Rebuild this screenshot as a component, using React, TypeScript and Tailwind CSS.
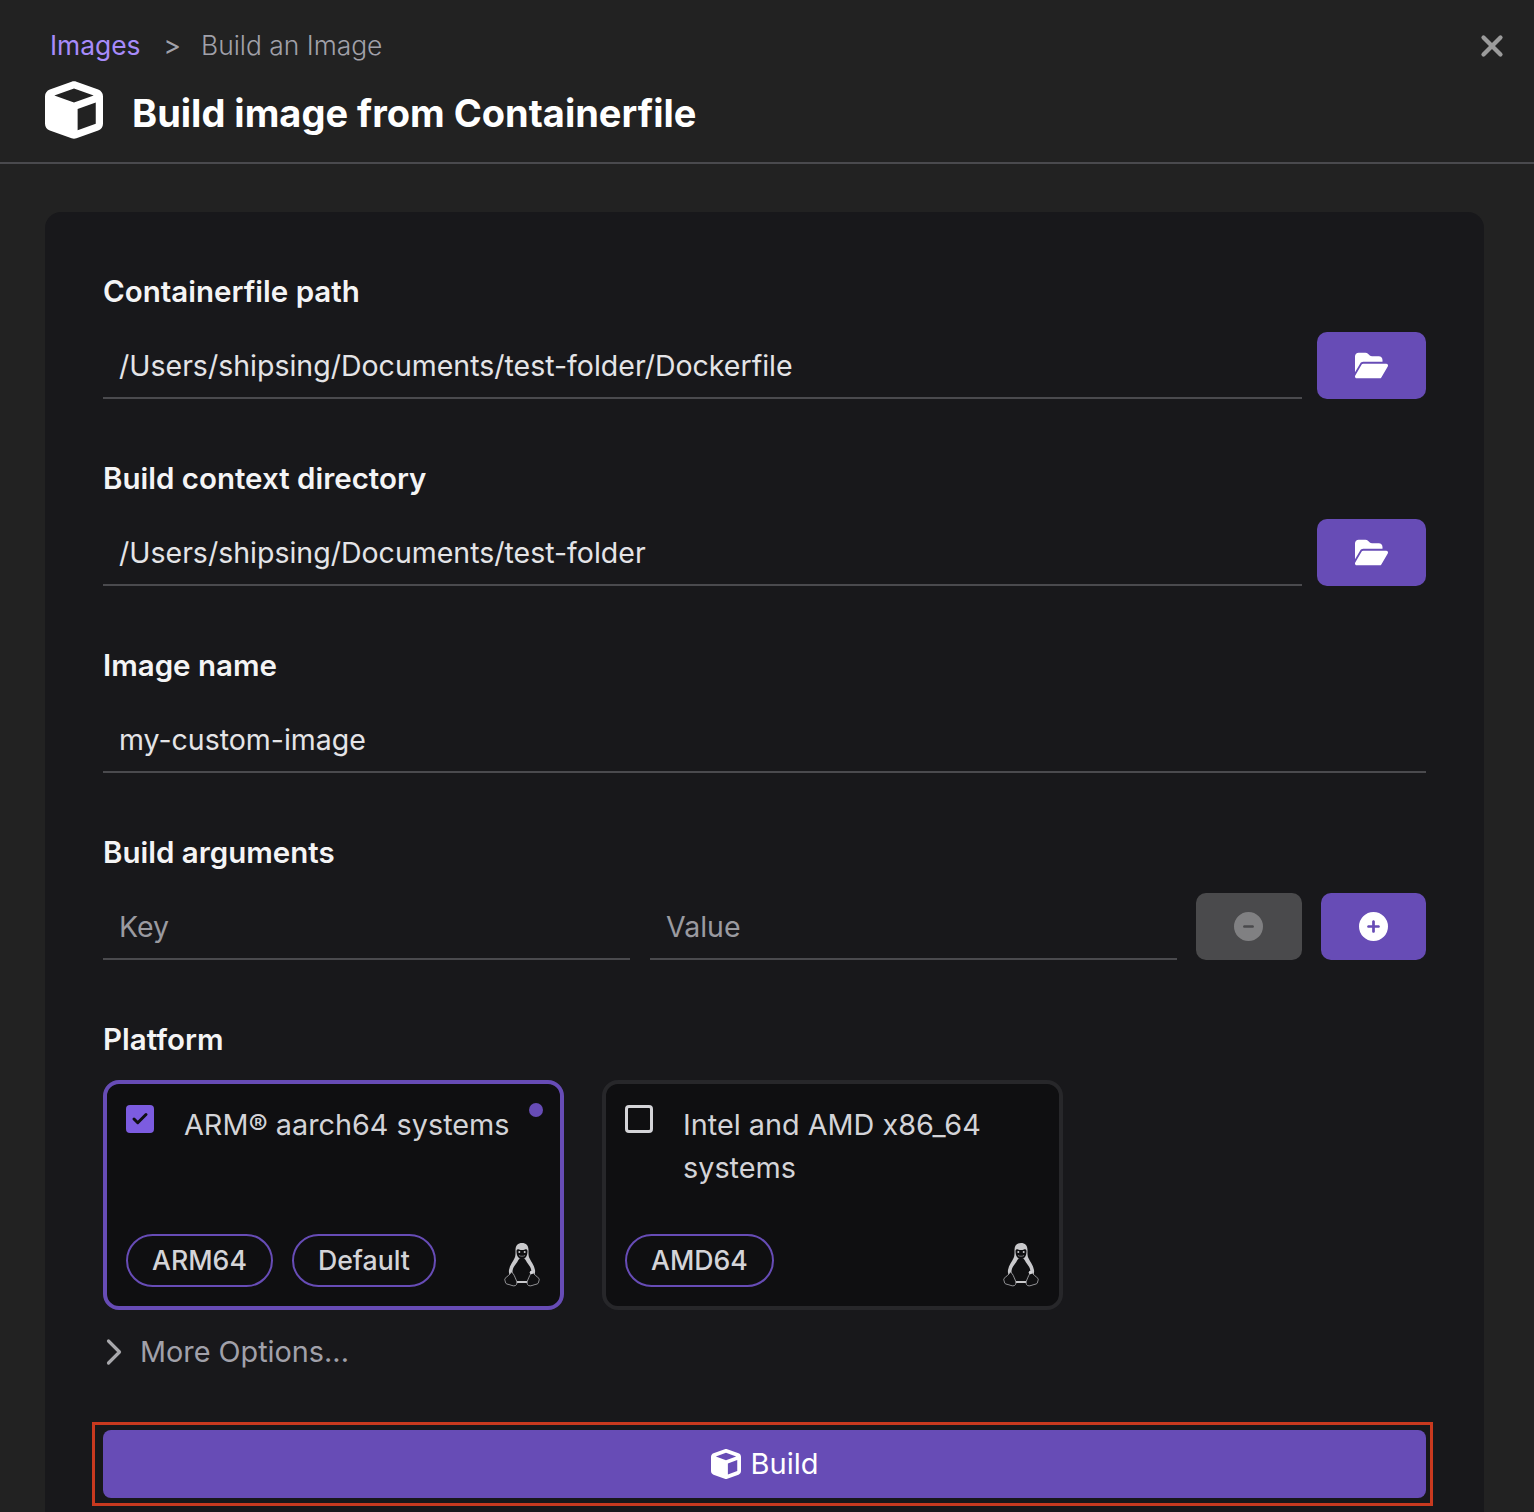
import { FaCube, FaFolderOpen, FaCircleMinus, FaCirclePlus } from "react-icons/fa6";
import { Check, ChevronRight, X } from "lucide-react";

function Tux() {
  return (
    <svg viewBox="0 0 36 44" className="h-[44px] w-[36px] shrink-0" fill="none">
      {/* head and back */}
      <path d="M18 0c-4 0-6.500 2.500-6.500 7 0 3.500.2 5.500-.9 8-1.600 3.500-4.800 7-5.600 12-.3 2 0 4 1 5l4 8h16l4-8c1-1 1.300-3 1-5-.8-5-4-8.500-5.600-12-1.100-2.500-.9-4.500-.9-8 0-4.500-2.500-7-6.500-7z" fill="#c9c9cc" />
      {/* belly */}
      <path d="M18 15c-2 0-3.300 1-4.200 3-1.400 3-5.300 6-5.300 11 0 4 1.500 7 3.500 9h12c2-2 3.500-5 3.500-9 0-5-3.900-8-5.300-11-.9-2-2.200-3-4.200-3z" fill="#0f0f11" />
      {/* face */}
      <path d="M12.500 8c0-1.500 1.500-2 2.500-1.500 1 .4 2 .6 3 .6s2-.2 3-.6c1-.5 2.500 0 2.500 1.500 0 2.500-.5 5-2 6.500-1 1-2.200 1.500-3.500 1.500s-2.500-.5-3.500-1.500c-1.500-1.500-2-4-2-6.500z" fill="#0f0f11" />
      <circle cx="15.300" cy="9" r="1" fill="#c9c9cc" />
      <circle cx="20.700" cy="9" r="1" fill="#c9c9cc" />
      <path d="M15 12.500c1.500 1 4.500 1 6 0" stroke="#8a8a8e" strokeWidth=".8" />
      {/* feet */}
      <path d="M7.500 29c-1.500 2.500-4.500 4.500-6.500 6.500-.7 1 .2 2.200.4 3.500.2 1.500 1 2 2.600 2.300 2.500.4 5.500 2.400 7.500 1.200 1.800-1.200 1.800-3.500.7-5.500-1.200-2.500-2.400-6.800-4.700-8z" fill="#0f0f11" stroke="#b4b4b8" strokeWidth=".8" strokeLinejoin="round" />
      <path d="M28.500 29c1.500 2.500 4.500 4.500 6.500 6.500.7 1-.2 2.200-.4 3.500-.2 1.500-1 2-2.600 2.300-2.500.4-5.500 2.400-7.500 1.200-1.800-1.200-1.800-3.500-.7-5.500 1.200-2.500 2.400-6.800 4.700-8z" fill="#0f0f11" stroke="#b4b4b8" strokeWidth=".8" strokeLinejoin="round" />
      <circle cx="27.500" cy="29.500" r="1.800" fill="#d4d4d8" />
    </svg>
  );
}

function Field({ label, children }: { label: string; children: React.ReactNode }) {
  return (
    <div className="mb-[60px]">
      <div className="mb-5 flex h-10 items-center pb-[2px] text-[29.500px] font-semibold text-[#f4f4f5]">{label}</div>
      {children}
    </div>
  );
}

function TextInput({ value, placeholder }: { value?: string; placeholder?: string }) {
  return (
    <div
      className={`flex h-[67px] min-w-0 flex-1 items-center border-b-2 border-[#4a4a4e] pl-4 pt-1 text-[28.500px] ${
        value ? "text-[#e4e4e7]" : "text-[#9a9aa0]"
      }`}
    >
      {value || placeholder}
    </div>
  );
}

function FolderButton() {
  return (
    <button className="flex h-[67px] w-[109px] shrink-0 items-center justify-center rounded-[10px] bg-[#674cb6] text-white">
      <FaFolderOpen size={33} />
    </button>
  );
}

function Pill({ text }: { text: string }) {
  return (
    <span className="flex h-[53px] items-center rounded-full border-2 border-[#674cb6] px-6 text-[26.700px] font-medium text-[#d4d4d8]">
      {text}
    </span>
  );
}

function PlatformCard({
  title,
  pills,
  selected,
}: {
  title: string;
  pills: string[];
  selected?: boolean;
}) {
  return (
    <div
      className={`relative flex h-[230px] w-[461px] flex-col justify-between rounded-2xl border-4 bg-[#0f0f11] pb-[19px] pl-[19px] pr-[20px] pt-[21px] ${
        selected ? "border-[#674cb6]" : "border-[#27272a]"
      }`}
    >
      <div className="flex items-start">
        {selected ? (
          <span className="flex h-[28px] w-[28px] shrink-0 items-center justify-center rounded-[4px] bg-[#7c5ce0] text-[#0f0f11]">
            <Check size={18} strokeWidth={4} />
          </span>
        ) : (
          <span className="h-[28px] w-[28px] shrink-0 rounded-[4px] border-[3px] border-[#d4d4d8]" />
        )}
        <div className="ml-[30px] mt-[-2px] w-[340px] text-[28.800px] leading-[43px] text-[#d4d4d8]">{title}</div>
      </div>
      <div className="flex items-end justify-between">
        <div className="flex gap-[19px]">
          {pills.map((p) => (
            <Pill key={p} text={p} />
          ))}
        </div>
        <Tux />
      </div>
      {selected && <span className="absolute right-[17px] top-[19px] h-[14px] w-[14px] rounded-full bg-[#674cb6]" />}
    </div>
  );
}

export default function App() {
  return (
    <div className="h-[1512px] w-full overflow-hidden bg-[#222222] font-['Inter',sans-serif]">
      {/* HEADER */}
      <div className="relative h-[164px] border-b-2 border-[#4a4a4e]">
        <div className="flex items-center pl-[50px] pt-[25px] text-[26.400px] leading-10">
          <span className="text-[#a78bfa]">Images</span>
          <span className="ml-[23px] text-[#a1a1aa]">&gt;</span>
          <span className="ml-5 font-light text-[#a1a1aa]">Build an Image</span>
        </div>
        <div className="mt-3 flex items-center pl-[45px]">
          <FaCube size={58} className="text-white" />
          <h1 className="ml-[29px] mt-[6px] text-[38px] font-bold leading-[60px] text-white">Build image from Containerfile</h1>
        </div>
        <X size={34} strokeWidth={3} className="absolute right-[25px] top-[29px] text-[#9b9b9b]" />
      </div>

      {/* FORM */}
      <div className="ml-[45px] mr-[50px] mt-[48px] rounded-t-2xl bg-[#18181b] px-[58px] pb-10 pt-[60px]">
        <Field label="Containerfile path">
          <div className="flex gap-[15px]">
            <TextInput value="/Users/shipsing/Documents/test-folder/Dockerfile" />
            <FolderButton />
          </div>
        </Field>
        <Field label="Build context directory">
          <div className="flex gap-[15px]">
            <TextInput value="/Users/shipsing/Documents/test-folder" />
            <FolderButton />
          </div>
        </Field>
        <Field label="Image name">
          <TextInput value="my-custom-image" />
        </Field>
        <Field label="Build arguments">
          <div className="flex">
            <TextInput placeholder="Key" />
            <div className="w-5 shrink-0" />
            <TextInput placeholder="Value" />
            <button className="ml-[19px] flex h-[67px] w-[106px] shrink-0 items-center justify-center rounded-[10px] bg-[#4a4a4c] pr-[2px] text-[#808082]">
              <FaCircleMinus size={29} />
            </button>
            <button className="ml-[19px] flex h-[67px] w-[105px] shrink-0 items-center justify-center rounded-[10px] bg-[#674cb6] text-white">
              <FaCirclePlus size={29} />
            </button>
          </div>
        </Field>

        <div className="mb-5 flex h-10 items-center pb-[2px] text-[29.500px] font-semibold text-[#f4f4f5]">Platform</div>
        <div className="flex gap-[38px]">
          <PlatformCard selected title="ARM® aarch64 systems" pills={["ARM64", "Default"]} />
          <PlatformCard title="Intel and AMD x86_64 systems" pills={["AMD64"]} />
        </div>

        <div className="mt-[20px] flex h-[44px] items-center text-[28.800px] text-[#a1a1aa]">
          <ChevronRight size={44} strokeWidth={1.75} className="-ml-[11px] mr-1 shrink-0 text-[#a8a8ac]" />
          More Options...
        </div>

        <div className="relative mt-[56px]">
          <button className="flex h-[68px] w-full items-center justify-center rounded-[8px] bg-[#674cb6] text-[29px] text-white">
            <FaCube size={30} className="mr-[10px]" />
            Build
          </button>
          <span className="absolute bottom-[-8px] left-[-11px] right-[-7px] top-[-8px] border-[3px] border-[#c8391f]" />
        </div>
      </div>
    </div>
  );
}
